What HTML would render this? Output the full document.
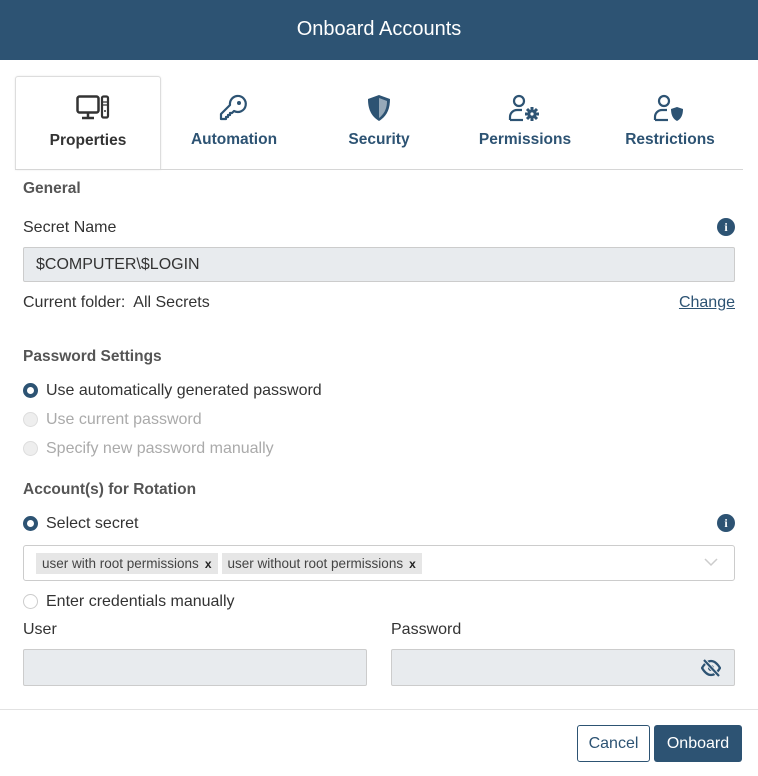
<!DOCTYPE html>
<html><head><meta charset="utf-8"><style>
*{box-sizing:border-box;margin:0;padding:0}
body{width:758px;height:776px;background:#fff;font-family:"Liberation Sans",sans-serif;color:#333;position:relative;overflow:hidden;font-size:16px}
.abs{position:absolute}
.hdr{left:0;top:0;width:758px;height:60px;background:#2d5373;color:#fff;font-size:20px;text-align:center;line-height:59px}
.tab{top:76px;width:146px;height:94px;text-align:center;color:#2d5373;font-size:15.5px;font-weight:bold}
.tab .lbl{position:absolute;top:55px;left:0;width:100%}
.tab svg{position:absolute;top:18px;left:60px}
.act{border:1px solid #ddd;border-bottom:none;border-radius:3px 3px 0 0;background:#fff;color:#333;box-shadow:0 0 2px rgba(0,0,0,.08)}
.line{left:15px;top:169px;width:728px;height:1px;background:#d6d6d6}
.h{font-weight:bold;color:#555;font-size:15.5px}
.inp{background:#e8ebee;border:1px solid #ccc;border-radius:2px}
.radio{width:15px;height:15px;border-radius:50%;border:1px solid #ccc;background:#fff}
.radio.on{border:4px solid #2d5373}
.radio.dis{background:#eee;border-color:#ddd}
.info{width:18px;height:18px;border-radius:50%;background:#2d5373;color:#fff;font-size:12px;font-weight:bold;text-align:center;line-height:18px;font-family:"Liberation Serif",serif}
.chips{left:36px;top:553px;display:flex;gap:4px}
.chip{height:21px;background:#e6e6e6;font-size:13.5px;line-height:21px;padding:0 6px;color:#444;white-space:nowrap}
.chip b{margin-left:6px;font-size:12px;color:#222}
</style></head><body>
<div class="abs hdr">Onboard Accounts</div>

<div class="abs tab act" style="left:15px">
<svg width="36" height="26" viewBox="0 0 36 26"><rect x="1.5" y="1.5" width="21" height="16" rx="2" fill="none" stroke="#333" stroke-width="2.5"/><path d="M12 18v4M6 23h12" stroke="#333" stroke-width="2.5"/><rect x="26" y="1.5" width="6" height="21" rx="1.5" fill="none" stroke="#333" stroke-width="2.2"/><path d="M27 7h4M27 10h4" stroke="#333" stroke-width="1.2"/><circle cx="29" cy="16" r="1" fill="#333"/></svg>
<div class="lbl">Properties</div></div>
<div class="abs tab" style="left:161px">
<svg width="30" height="28" viewBox="0 0 30 28" style="left:58px"><path d="M18 2a8 8 0 1 1-3 15l-2 2h-2v2h-2v2H7v2H2v-5l9-9a8 8 0 0 1 7-9z" fill="none" stroke="#2d5373" stroke-width="2.2" stroke-linejoin="round"/><circle cx="20" cy="9" r="2" fill="#2d5373"/></svg>
<div class="lbl">Automation</div></div>
<div class="abs tab" style="left:306px">
<svg width="30" height="28" viewBox="0 0 30 28" style="left:60px"><path d="M13 1l11 4c0 10-3 17-11 22C5 22 2 15 2 5z" fill="#2d5373"/><path d="M13 4l8 3c0 8-3 13-8 17z" fill="#fff" opacity=".5"/></svg>
<div class="lbl">Security</div></div>
<div class="abs tab" style="left:452px">
<svg width="34" height="28" viewBox="0 0 34 28" style="left:56px"><circle cx="11" cy="7" r="5" fill="none" stroke="#2d5373" stroke-width="2.2"/><path d="M2 26v-3a7 7 0 0 1 7-7h5" fill="none" stroke="#2d5373" stroke-width="2.2"/><path d="M2 26h13" stroke="#2d5373" stroke-width="2.2"/><g stroke="#2d5373" stroke-width="3" stroke-linecap="butt"><path d="M24 13v14M17 20h14M19 15l10 10M29 15l-10 10"/></g><circle cx="24" cy="20" r="4.5" fill="#2d5373"/><circle cx="24" cy="20" r="1.6" fill="#fff"/></svg>
<div class="lbl">Permissions</div></div>
<div class="abs tab" style="left:597px">
<svg width="34" height="28" viewBox="0 0 34 28" style="left:56px"><circle cx="11" cy="7" r="5" fill="none" stroke="#2d5373" stroke-width="2.2"/><path d="M2 26v-3a7 7 0 0 1 7-7h5" fill="none" stroke="#2d5373" stroke-width="2.2"/><path d="M2 26h13" stroke="#2d5373" stroke-width="2.2"/><path d="M24 13l6 2c0 6-2 10-6 12-4-2-6-6-6-12z" fill="#2d5373"/></svg>
<div class="lbl">Restrictions</div></div>
<div class="abs line"></div>

<div class="abs h" style="left:23px;top:180px">General</div>
<div class="abs" style="left:23px;top:219px">Secret Name</div>
<div class="abs info" style="left:717px;top:218px">i</div>
<div class="abs inp" style="left:23px;top:247px;width:712px;height:35px;padding:8px 12px;color:#333">$COMPUTER\$LOGIN</div>
<div class="abs" style="left:23px;top:294px">Current folder:&nbsp; All Secrets</div>
<div class="abs" style="right:23px;top:294px;color:#2d5373;text-decoration:underline">Change</div>

<div class="abs h" style="left:23px;top:348px">Password Settings</div>
<div class="abs radio on" style="left:23px;top:383px"></div><div class="abs" style="left:46px;top:382px">Use automatically generated password</div>
<div class="abs radio dis" style="left:23px;top:412px"></div><div class="abs" style="left:46px;top:411px;color:#aaa">Use current password</div>
<div class="abs radio dis" style="left:23px;top:441px"></div><div class="abs" style="left:46px;top:440px;color:#aaa">Specify new password manually</div>

<div class="abs h" style="left:23px;top:481px">Account(s) for Rotation</div>
<div class="abs radio on" style="left:23px;top:516px"></div><div class="abs" style="left:46px;top:515px">Select secret</div>
<div class="abs info" style="left:717px;top:514px">i</div>
<div class="abs" style="left:23px;top:545px;width:712px;height:36px;border:1px solid #ccc;border-radius:3px"></div>
<div class="abs chips"><div class="chip">user with root permissions<b>x</b></div><div class="chip">user without root permissions<b>x</b></div></div>
<svg class="abs" style="left:704px;top:558px" width="14" height="9" viewBox="0 0 14 9"><path d="M1 1l6 6 6-6" fill="none" stroke="#ccc" stroke-width="1.5"/></svg>
<div class="abs radio" style="left:23px;top:594px"></div><div class="abs" style="left:46px;top:593px">Enter credentials manually</div>

<div class="abs" style="left:23px;top:621px">User</div>
<div class="abs" style="left:391px;top:621px">Password</div>
<div class="abs inp" style="left:23px;top:649px;width:344px;height:37px"></div>
<div class="abs inp" style="left:391px;top:649px;width:344px;height:37px"></div>
<svg class="abs" style="left:701px;top:659px" width="20" height="18" viewBox="0 0 20 18"><path d="M1 9c3-5 6-7 9-7s6 2 9 7c-3 5-6 7-9 7s-6-2-9-7z" fill="none" stroke="#2d5373" stroke-width="2.2"/><circle cx="10" cy="9" r="3" fill="#2d5373"/><path d="M3 1l15 16" stroke="#e8ebee" stroke-width="4"/><path d="M3 1l15 16" stroke="#2d5373" stroke-width="2.2"/></svg>

<div class="abs" style="left:0;top:709px;width:758px;height:1px;background:#e2e2e2"></div>
<div class="abs" style="left:577px;top:725px;width:73px;height:37px;border:1px solid #2d5373;border-radius:3px;color:#2d5373;text-align:center;line-height:35px">Cancel</div>
<div class="abs" style="left:654px;top:725px;width:88px;height:37px;background:#2d5373;border-radius:3px;color:#fff;text-align:center;line-height:37px">Onboard</div>
</body></html>
